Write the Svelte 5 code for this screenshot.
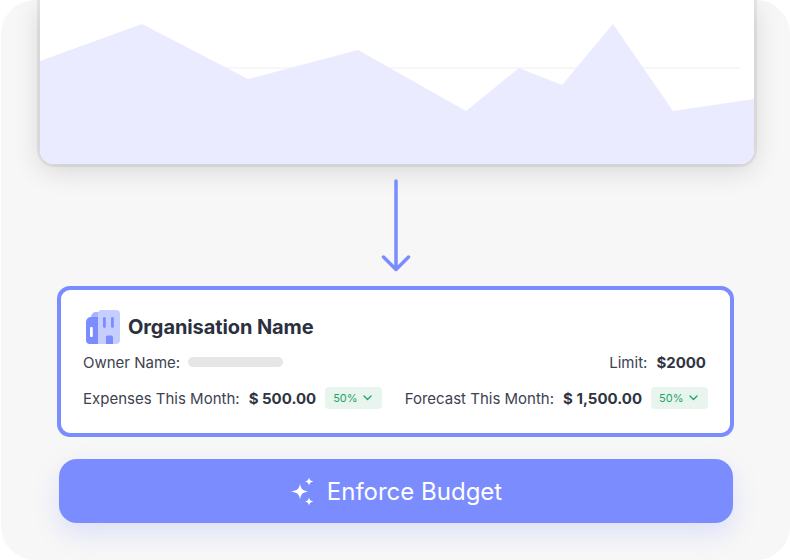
<script lang="ts">
    const points = "0,-3 102,-40 208,15 318,-14 426,47 479,4 522,21 573,-40 633,47 714,35 714,100 0,100";
</script>

<main class="shell">
    <section class="chart-card">
        <svg class="chart" width="714" height="164" viewBox="0 -64 714 164" aria-hidden="true">
            <line x1="0" y1="4" x2="700" y2="4" stroke="#f5f5f7" stroke-width="1.5" />
            <polygon points={points} fill="#eaebfe" />
        </svg>
    </section>

    <svg class="arrow" width="34" height="94" viewBox="0 0 34 94" aria-hidden="true">
        <path d="M17 2V90M4.500 78L17 90.500L29.500 78" fill="none" stroke="#7b8cff" stroke-width="3.500" stroke-linecap="round" stroke-linejoin="round" />
    </svg>

    <section class="org-card">
        <header class="org-head">
            <svg width="34" height="34" viewBox="0 0 34 34" aria-hidden="true">
                <path d="M0 12a5 5 0 0 1 5-5h7v27H4a4 4 0 0 1-4-4z" fill="#7b8cff" />
                <path d="M5 7a5 5 0 0 1 5-5h4v5z" fill="#a9b5ff" />
                <path d="M12 4a4 4 0 0 1 4-4h14a4 4 0 0 1 4 4v26a4 4 0 0 1-4 4H12z" fill="#c6ceff" />
                <rect x="4" y="17" width="2.800" height="10" rx="1" fill="#fff" />
                <rect x="17" y="7" width="2.800" height="11" rx="1.400" fill="#7b8cff" />
                <rect x="25" y="7" width="2.800" height="11" rx="1.400" fill="#7b8cff" />
                <path d="M20 27a1.500 1.500 0 0 1 1.500-1.500h4a1.500 1.500 0 0 1 1.500 1.500v7h-7z" fill="#7b8cff" />
            </svg>
            <h2>Organisation Name</h2>
        </header>

        <div class="row owner-row">
            <span class="field">
                <span class="label">Owner Name:</span>
                <span class="placeholder"></span>
            </span>
            <span class="field limit">
                <span class="label">Limit:</span>
                <strong>$2000</strong>
            </span>
        </div>

        <div class="row money-row">
            {#each [["Expenses This Month:", "$ 500.00"], ["Forecast This Month:", "$ 1,500.00"]] as [label, value]}
                <span class="field">
                    <span class="label">{label}</span>
                    <strong>{value}</strong>
                    <span class="badge">
                        50%
                        <svg width="9" height="6" viewBox="0 0 9 6" aria-hidden="true">
                            <path d="M1 1l3.500 3.500L8 1" fill="none" stroke="#1fa365" stroke-width="1.300" stroke-linecap="round" stroke-linejoin="round" />
                        </svg>
                    </span>
                </span>
            {/each}
        </div>
    </section>

    <button class="enforce" type="button">
        <svg width="26" height="29" viewBox="0 0 26 29" aria-hidden="true">
            <path d="M10 6.500C11 12 12.500 13.500 18 14.500C12.500 15.500 11 17 10 22.500C9 17 7.500 15.500 1 14.500C7.500 13.500 9 12 10 6.500Z" fill="#fff" />
            <path d="M19 0.500C19.500 3 20.500 4 23.500 4.500C20.500 5 19.500 6 19 8.500C18.500 6 17.500 5 15 4.500C17.500 4 18.500 3 19 0.500Z" fill="#fff" />
            <path d="M19 20.500C19.500 23 20.500 24 23.500 24.500C20.500 25 19.500 26 19 28.500C18.500 26 17.500 25 15 24.500C17.500 24 18.500 23 19 20.500Z" fill="#fff" />
        </svg>
        Enforce Budget
    </button>
</main>

<style>
    :global(body) {
        margin: 0;
        background: #fff;
    }
    .shell {
        box-sizing: border-box;
        width: 789px;
        height: 560px;
        margin-left: 1px;
        border-radius: 34px;
        background: #f7f7f7;
        overflow: hidden;
        display: flex;
        flex-direction: column;
        align-items: flex-start;
        font-family: Inter, "Liberation Sans", sans-serif;
        color: #2b3040;
    }
    .chart-card {
        width: 714px;
        height: 164px;
        margin-left: 39px;
        flex: none;
        background: #fff;
        border-radius: 0 0 14px 14px;
        overflow: hidden;
        box-shadow: 0 0 0 3px rgba(0, 0, 0, 0.06), 0 6px 28px rgba(0, 0, 0, 0.14);
    }
    .chart {
        display: block;
    }
    .arrow {
        display: block;
        flex: none;
        margin: 15px 0 0 378px;
    }
    .org-card {
        box-sizing: border-box;
        width: 677px;
        height: 151px;
        flex: none;
        margin: 13px 0 0 56px;
        padding: 20px 24px 0 22px;
        background: #fff;
        border: 4px solid #7b8cff;
        border-radius: 13px;
    }
    .org-head {
        display: flex;
        align-items: center;
        gap: 8px;
        height: 34px;
        margin-left: 3px;
    }
    h2 {
        margin: 0;
        font-size: 20px;
        font-weight: 700;
        letter-spacing: -0.1px;
        color: #2b3040;
    }
    .row {
        display: flex;
        justify-content: space-between;
        align-items: center;
        font-size: 15px;
    }
    .owner-row {
        height: 20px;
        margin-top: 8px;
    }
    .money-row {
        height: 22px;
        margin-top: 15px;
        margin-right: -2px;
    }
    .field {
        display: flex;
        align-items: center;
    }
    .label {
        color: #3d4250;
    }
    .field strong {
        margin-left: 9px;
        font-weight: 700;
        color: #2f3442;
    }
    .limit strong {
        margin-left: 9px;
    }
    .placeholder {
        width: 95px;
        height: 10px;
        margin-left: 8px;
        border-radius: 5px;
        background: #e6e6e6;
    }
    .badge {
        box-sizing: border-box;
        display: flex;
        align-items: center;
        justify-content: space-between;
        width: 57px;
        height: 22px;
        margin-left: 9px;
        padding: 0 10px 0 8px;
        border-radius: 4px;
        background: #e8f5ef;
        color: #1fa365;
        font-size: 11px;
    }
    .enforce {
        box-sizing: border-box;
        width: 674px;
        height: 64px;
        flex: none;
        margin: 22px 0 0 58px;
        display: flex;
        align-items: center;
        justify-content: center;
        gap: 11px;
        border: none;
        border-radius: 18px;
        background: #7b8cff;
        box-shadow: 0 10px 24px rgba(123, 140, 255, 0.22);
        color: #fff;
        font-family: inherit;
        font-size: 24px;
        font-weight: 400;
    }
</style>
